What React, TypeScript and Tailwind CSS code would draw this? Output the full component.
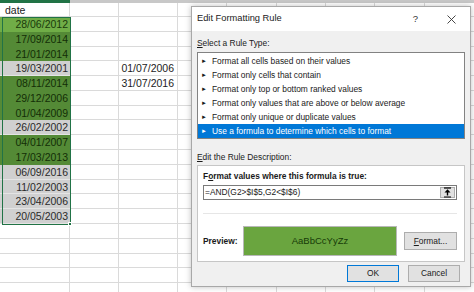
import React from "react";

type Kind = "active" | "green" | "sel";
const rows: { a: string; k: Kind; c?: string }[] = [
  { a: "28/06/2012", k: "active" },
  { a: "17/09/2014", k: "green" },
  { a: "21/01/2014", k: "green" },
  { a: "19/03/2001", k: "sel", c: "01/07/2006" },
  { a: "08/11/2014", k: "green", c: "31/07/2016" },
  { a: "29/12/2006", k: "green" },
  { a: "01/04/2009", k: "green" },
  { a: "26/02/2002", k: "sel" },
  { a: "04/01/2007", k: "green" },
  { a: "17/03/2013", k: "green" },
  { a: "06/09/2016", k: "sel" },
  { a: "11/02/2003", k: "sel" },
  { a: "23/04/2006", k: "sel" },
  { a: "20/05/2003", k: "sel" },
];

const restCols = [49, 50, 49, 49, 50, 50];

function Rest() {
  return (
    <>
      {restCols.map((w, i) => (
        <div key={i} className="shrink-0 border-r border-[#dadada]" style={{ width: w }} />
      ))}
    </>
  );
}

function Grid() {
  return (
    <div className="flex flex-col [font-family:'Liberation_Sans',Arial,sans-serif] text-[10.5px] text-[#222]">
      <div className="flex h-[2.5px]">
        <div className="w-[70px] shrink-0 bg-[#217346]" />
        <div className="flex-1 bg-[#c8c8c8]" />
      </div>
      <div className="flex h-[14.5px] border-b border-[#dadada]">
        <div className="w-[70px] shrink-0 border-r border-[#dadada] pl-[5px] leading-[14px]">date</div>
        <div className="w-[49px] shrink-0 border-r border-[#dadada]" />
        <div className="w-[59px] shrink-0 border-r border-[#dadada]" />
        <Rest />
      </div>
      {rows.map((r, i) => (
        <div key={i} className="flex h-[14.786px]">
          <div
            className={
              "w-[70px] shrink-0 pr-[2px] text-right leading-[14.8px] " +
              (r.k === "active"
                ? "bg-[#70ad47] text-[#1a3a0a]"
                : r.k === "green"
                ? "bg-[#548a36] text-[#132e06]"
                : "bg-[#d0d0d0] border-b border-[#e4e4e4] text-[#2a2a2a]")
            }
          >
            {r.a}
          </div>
          <div className="w-[49px] shrink-0 border-r border-b border-[#dadada]" />
          <div className="w-[59px] shrink-0 border-r border-b border-[#dadada] pr-[3px] text-right leading-[14px]">
            {r.c ?? ""}
          </div>
          {restCols.map((w, j) => (
            <div key={j} className="shrink-0 border-r border-b border-[#dadada]" style={{ width: w }} />
          ))}
        </div>
      ))}
      {[0, 1, 2, 3, 4].map((i) => (
        <div key={i} className="flex h-[14.786px]">
          <div className="w-[70px] shrink-0 border-r border-b border-[#dadada]" />
          <div className="w-[49px] shrink-0 border-r border-b border-[#dadada]" />
          <div className="w-[59px] shrink-0 border-r border-b border-[#dadada]" />
          {restCols.map((w, j) => (
            <div key={j} className="shrink-0 border-r border-b border-[#dadada]" style={{ width: w }} />
          ))}
        </div>
      ))}
    </div>
  );
}

function CollapseIcon() {
  return (
    <svg width="9" height="11" viewBox="0 0 9 11">
      <line x1="1" y1="1" x2="8" y2="1" stroke="#000" strokeWidth="1.2" />
      <path d="M4.5 2.2 L7.5 5.5 L1.5 5.5 Z" fill="#000" />
      <line x1="4.5" y1="5" x2="4.5" y2="8.5" stroke="#000" strokeWidth="1.4" />
      <line x1="1" y1="10" x2="8" y2="10" stroke="#000" strokeWidth="1" />
    </svg>
  );
}

const items = [
  "Format all cells based on their values",
  "Format only cells that contain",
  "Format only top or bottom ranked values",
  "Format only values that are above or below average",
  "Format only unique or duplicate values",
  "Use a formula to determine which cells to format",
];

function Dialog() {
  return (
    <div className="absolute left-[191px] top-[6px] flex h-[281px] w-[280px] flex-col border border-[#a8a8a8] bg-[#f0f0f0] [font-family:'Liberation_Sans',Arial,sans-serif] text-[8.4px] text-[#1a1a1a] shadow-[0_0_6px_rgba(0,0,0,0.25)]">
      <div className="flex h-[24px] shrink-0 items-center bg-white pl-[5px]">
        <span className="text-[9.3px] text-[#222]">Edit Formatting Rule</span>
        <span className="ml-auto mr-[29px] text-[9.5px] text-[#333]">?</span>
        <svg width="9" height="9" viewBox="0 0 9 9" className="mr-[14px]">
          <path d="M0.5 0.5 L8.5 8.5 M8.5 0.5 L0.5 8.5" stroke="#333" strokeWidth="0.9" />
        </svg>
      </div>
      <div className="flex flex-1 flex-col px-[5px]">
        <div className="mt-[6px] h-[12px] leading-[12px]">
          <span className="underline">S</span>elect a Rule Type:
        </div>
        <div className="mt-[3px] h-[87px] border border-[#828282] bg-white pt-[1px]">
          {items.map((t, i) => (
            <div
              key={i}
              className={
                "flex h-[14px] items-center pl-[3px] " +
                (i === 5 ? "bg-[#0078d7] text-white" : "text-[#1a1a1a]")
              }
            >
              <span className="mr-[5px] text-[6px]">►</span>
              {t}
            </div>
          ))}
        </div>
        <div className="mt-[12px] h-[12px] leading-[12px]">
          <span className="underline">E</span>dit the Rule Description:
        </div>
        <div className="mt-[2px] flex h-[97px] flex-col border border-[#c6c6c6] bg-white px-[5px]">
          <div className="mt-[4px] h-[12px] font-bold leading-[12px]">
            F<span className="underline">o</span>rmat values where this formula is true:
          </div>
          <div className="mt-[3px] mr-[2px] flex h-[15px] items-center border border-[#7a7a7a] pl-[1px]">
            <span>=AND(G2&gt;$I$5,G2&lt;$I$6)</span>
            <div className="ml-auto mr-[1px] flex h-[11px] w-[15px] items-center justify-center border border-[#adadad] bg-[#e1e1e1]">
              <CollapseIcon />
            </div>
          </div>
          <div className="mt-[13px] mr-[2px] h-px bg-[#e6e6e6]" />
          <div className="mt-[12px] flex items-center">
            <span className="w-[40px] font-bold">Preview:</span>
            <div className="flex h-[30px] w-[154px] items-center justify-center border border-[#b8b8b8] bg-[#6aa53f] text-[9.5px] text-[#163a08]">
              AaBbCcYyZz
            </div>
            <div className="ml-[7px] flex h-[18px] w-[53px] items-center justify-center border border-[#adadad] bg-[#e1e1e1]">
              <span className="underline">F</span>ormat...
            </div>
          </div>
        </div>
        <div className="mt-[3px] flex justify-end gap-[9px] pr-[5px]">
          <div className="flex h-[17px] w-[52px] items-center justify-center border border-[#0078d7] bg-[#e1e1e1]">
            OK
          </div>
          <div className="flex h-[17px] w-[52px] items-center justify-center border border-[#adadad] bg-[#e1e1e1]">
            Cancel
          </div>
        </div>
      </div>
    </div>
  );
}

export default function App() {
  return (
    <div className="relative h-[292px] w-[474px] overflow-hidden bg-white">
      <Grid />
      <div className="pointer-events-none absolute left-[2px] top-[17px] h-[208px] w-[69px] border border-[#217346]" />
      <div className="absolute left-[68px] top-[222px] h-[4px] w-[4px] border border-white bg-[#217346]" />
      <Dialog />
    </div>
  );
}
